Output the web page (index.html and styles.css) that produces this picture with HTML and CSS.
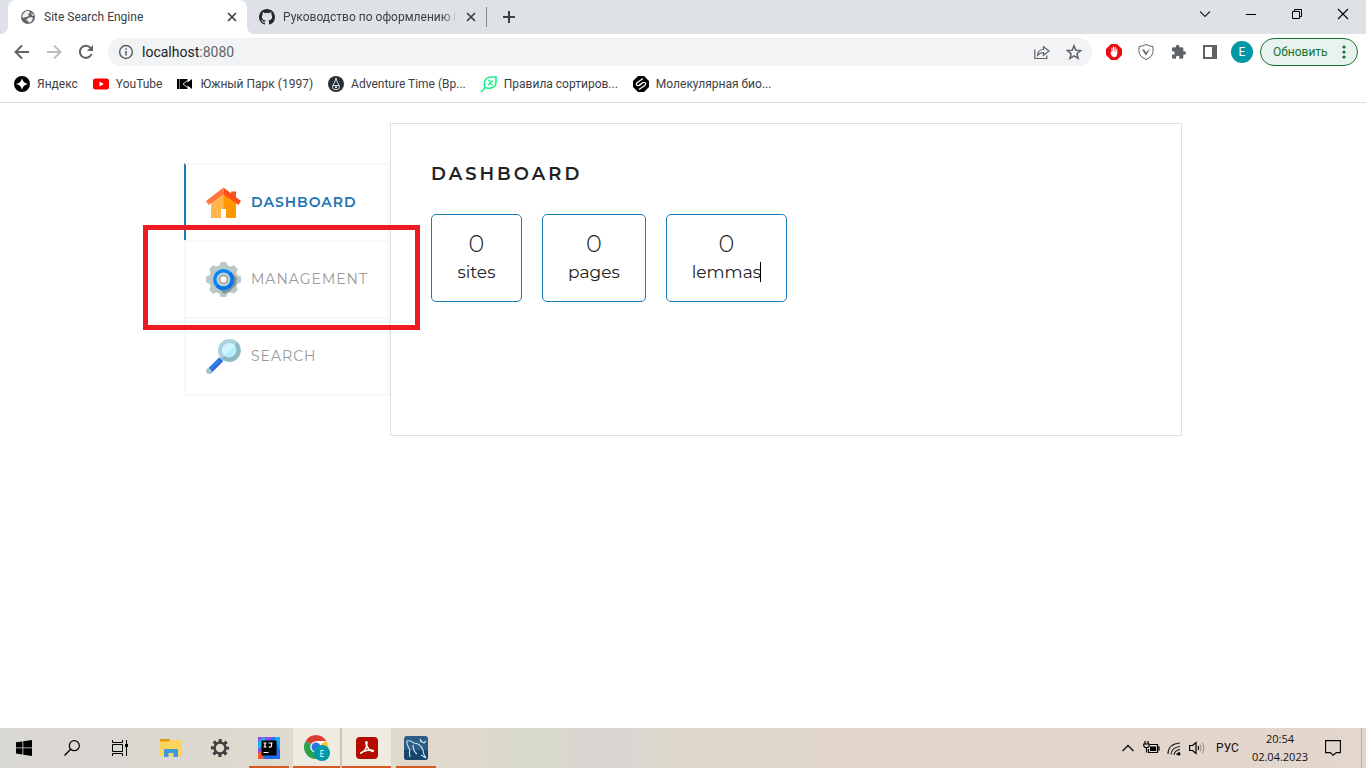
FILE: index.html
```html
<!DOCTYPE html>
<html lang="ru">
<head>
<meta charset="utf-8">
<title>Site Search Engine</title>
<link rel="stylesheet" href="styles.css">
</head>
<body>
<header class="browser">
  <div class="tabstrip">
    <div class="tab tab-active">
      <svg class="i16" viewBox="0 0 16 16"><circle cx="8" cy="8" r="7" fill="#5f6368"/><path d="M3 5l3-3h3l1 2-2 1 1 1.500-2 1.500H5L4 9 2 8zM8 9l3-1 2 1-1 3-3 2-1-2-2-1zM11 4l2 1 1 2-2-.5z" fill="#fff" opacity=".9"/></svg>
      <span class="tab-title">Site Search Engine</span>
      <button class="icon-btn" aria-label="Закрыть вкладку"><svg class="i16" viewBox="0 0 16 16"><path d="M4 4l8 8M12 4l-8 8" stroke="#3c4043" stroke-width="1.700"/></svg></button>
    </div>
    <div class="tab">
      <svg class="i16" viewBox="0 0 16 16"><path fill="#24292f" d="M8 0C3.580 0 0 3.580 0 8c0 3.540 2.290 6.530 5.470 7.590.4.070.55-.17.55-.38 0-.19-.01-.82-.01-1.490-2.010.37-2.530-.49-2.690-.94-.09-.23-.48-.94-.82-1.130-.28-.15-.68-.52-.01-.53.63-.01 1.080.58 1.230.82.72 1.210 1.870.87 2.330.66.070-.52.28-.87.51-1.070-1.780-.2-3.640-.89-3.640-3.950 0-.87.31-1.590.82-2.150-.08-.2-.36-1.020.08-2.120 0 0 .67-.21 2.200.82a7.600 7.600 0 0 1 4 0c1.530-1.040 2.200-.82 2.200-.82.44 1.100.16 1.920.08 2.120.51.56.82 1.270.82 2.150 0 3.070-1.870 3.750-3.650 3.950.29.25.54.73.54 1.480 0 1.070-.01 1.930-.01 2.200 0 .21.15.46.55.38A8 8 0 0 0 16 8c0-4.420-3.580-8-8-8z"/></svg>
      <span class="tab-title fade">Руководство по оформлению M</span>
      <button class="icon-btn" aria-label="Закрыть вкладку"><svg class="i16" viewBox="0 0 16 16"><path d="M4 4l8 8M12 4l-8 8" stroke="#3c4043" stroke-width="1.700"/></svg></button>
    </div>
    <button class="icon-btn new-tab" aria-label="Новая вкладка"><svg class="i16" viewBox="0 0 16 16"><path d="M8 2v12M2 8h12" stroke="#3c4043" stroke-width="2"/></svg></button>
    <div class="window-buttons">
      <button class="icon-btn" aria-label="Поиск вкладок"><svg class="i16" viewBox="0 0 16 16"><path d="M3 5.500l5 5 5-5" fill="none" stroke="#222" stroke-width="1.100"/></svg></button>
      <button class="icon-btn" aria-label="Свернуть"><svg class="i16" viewBox="0 0 16 16"><path d="M3 8.500h10" stroke="#000"/></svg></button>
      <button class="icon-btn" aria-label="Восстановить"><svg class="i16" viewBox="0 0 16 16"><path d="M3.500 5.500h7v7h-7zM5.500 5.500v-2h7v7h-2" fill="none" stroke="#000"/></svg></button>
      <button class="icon-btn" aria-label="Закрыть"><svg class="i16" viewBox="0 0 16 16"><path d="M3 3l10 10M13 3L3 13" stroke="#000" stroke-width="1.100"/></svg></button>
    </div>
  </div>
  <div class="toolbar">
    <div class="nav-buttons">
      <button class="icon-btn" aria-label="Назад"><svg class="i16" viewBox="0 0 16 16"><path d="M15 8H2M8 1.500L1.500 8 8 14.500" fill="none" stroke="#5f6368" stroke-width="1.900"/></svg></button>
      <button class="icon-btn" aria-label="Вперёд"><svg class="i16" viewBox="0 0 16 16"><path d="M1 8h13M8 1.500L14.500 8 8 14.500" fill="none" stroke="#bbbdbf" stroke-width="1.900"/></svg></button>
      <button class="icon-btn" aria-label="Обновить страницу"><svg class="i16" viewBox="0 0 16 16"><path d="M13.500 10A6 6 0 1 1 12.500 4" fill="none" stroke="#5f6368" stroke-width="2"/><path d="M15 1v6H9z" fill="#5f6368"/></svg></button>
    </div>
    <div class="omnibox">
      <svg class="i16" viewBox="0 0 16 16"><circle cx="8" cy="8" r="6.400" fill="none" stroke="#5f6368" stroke-width="1.500"/><path d="M8 7v4.500M8 4.200v1.600" stroke="#5f6368" stroke-width="1.600"/></svg>
      <span class="url">localhost<span class="port">:8080</span></span>
      <button class="icon-btn" aria-label="Поделиться"><svg class="i16" viewBox="0 0 16 16"><path d="M.8 5.500v9h12v-3M3.500 11.500c.3-4 2.500-6 6-6V2.700L15 7l-5.500 4.200V8.500C6.500 8.500 5 9.500 3.500 11.500z" fill="none" stroke="#5f6368" stroke-width="1.200"/></svg></button>
      <button class="icon-btn" aria-label="Добавить в закладки"><svg class="i16" viewBox="0 0 16 16"><path d="M8 1.800l1.800 4.400 4.800.4-3.700 3.100 1.200 4.700L8 11.900l-4.100 2.500 1.200-4.700L1.400 6.600l4.800-.4z" fill="none" stroke="#5f6368" stroke-width="1.500"/></svg></button>
    </div>
    <div class="extensions">
      <button class="icon-btn" aria-label="AdBlock"><svg class="i16" viewBox="0 0 16 16"><path d="M5 0h6l5 5v6l-5 5H5l-5-5V5z" fill="#e60f14"/><path d="M4.500 8l1 0V4q.5-.8 1 0v3h.5V3q.5-.8 1.100 0v4h.5V3.500q.5-.8 1.100 0V8h.5V5q.6-.7 1.100 0v5q-.5 3-3 3.200Q6 13 5 10.500z" fill="#fff"/></svg></button>
      <button class="icon-btn" aria-label="Защита"><svg class="i16" viewBox="0 0 16 16"><path d="M1 2.500Q5 2.300 8 .5q3 1.800 7 2v5q0 5-7 8-7-3-7-8z" fill="none" stroke="#5f6368"/><path d="M4 5.500h2.200l1.700 3L12.500 4 8 11.500z" fill="#5f6368"/></svg></button>
      <button class="icon-btn" aria-label="Расширения"><svg class="i16" viewBox="0 0 24 24"><path fill="#5f6368" d="M21.500 11H20V7c0-1.100-.9-2-2-2h-4V3.500a2.500 2.500 0 0 0-5 0V5H5c-1.100 0-2 .9-2 2v3.800h1.500a2.700 2.700 0 0 1 0 5.400H3V20c0 1.100.9 2 2 2h3.800v-1.500a2.700 2.700 0 0 1 5.400 0V22H18c1.100 0 2-.9 2-2v-4h1.500a2.500 2.500 0 0 0 0-5z"/></svg></button>
      <button class="icon-btn" aria-label="Боковая панель"><svg class="i16" viewBox="0 0 16 16"><path fill-rule="evenodd" fill="#5f6368" d="M1 1h14v14H1zm2 2v10h7V3z"/></svg></button>
    </div>
    <button class="avatar" aria-label="Профиль E">E</button>
    <button class="update">Обновить<svg class="dots" viewBox="0 0 4 14"><g fill="#137333"><circle cx="2" cy="2" r="1.600"/><circle cx="2" cy="7" r="1.600"/><circle cx="2" cy="12" r="1.600"/></g></svg></button>
  </div>
  <nav class="bookmarks" aria-label="Закладки">
    <a href="#"><svg class="i16" viewBox="0 0 16 16"><circle cx="8" cy="8" r="8"/><path d="M8 2q.8 5.200 6 6-5.200.8-6 6-.8-5.200-6-6 5.200-.8 6-6z" fill="#fff"/></svg>Яндекс</a>
    <a href="#"><svg class="i16" viewBox="0 0 16 16"><rect y="2.500" width="16" height="11" rx="2.500" fill="red"/><path d="M6.500 5.500v5L10.800 8z" fill="#fff"/></svg>YouTube</a>
    <a href="#"><svg class="i16" viewBox="0 0 16 16"><path d="M0 3h10.500v3.500L15 3v10l-4.500-3.500V13H0z"/><path d="M2.500 3v10" stroke="#777"/><path d="M10.500 4.500L6 8l4.500 3.500" fill="none" stroke="#ddd"/></svg>Южный Парк (1997)</a>
    <a href="#"><svg class="i16" viewBox="0 0 16 16"><circle cx="8" cy="8" r="8" fill="#25303b"/><path d="M8 2l1.200 4 2 3.500v3l-1.500 1H6.300l-1.500-1v-3l2-3.500zM5 9.500h6" fill="none" stroke="#d5dce2"/><circle cx="8" cy="11.200" r="1" fill="#fff"/></svg>Adventure Time (Вр...</a>
    <a href="#"><svg class="i16" viewBox="0 0 16 16"><path d="M0 16l5-5M4 11.500Q2.500 8 4 4.500 6 1 10 1h5v5q0 4-3.500 5.500-3 1.500-7.500 0z" fill="none" stroke="#22f08f" stroke-width="1.700"/><path d="M7 4.500q1.500-.5 2 1l.7 2q.5 1.500 2 .8M12 4.500L7 9" fill="none" stroke="#22f08f" stroke-width="1.300"/></svg>Правила сортиров...</a>
    <a href="#"><svg class="i16" viewBox="0 0 16 16"><path d="M5 0h6l5 5v6l-5 5H5l-5-5V5z"/><path d="M10 2.500L4 6.800q-1.500 1.700.3 2.700 1 .4 2-.4L10 6.500M6 13.500l6-4.300q1.500-1.700-.3-2.700-1-.4-2 .4L6 9.700" fill="none" stroke="#fff" stroke-width="1.200"/></svg>Молекулярная био...</a>
  </nav>
</header>

<main class="page">
  <nav class="menu" aria-label="Разделы">
    <a class="menu-item menu-item-active" href="#">
      <svg class="menu-icon" viewBox="0 0 35 35"><path d="M5 17L17.500 8 30 17v16H5z" fill="#ffb64c"/><path d="M17.500 8L30 17v16H17.500z" fill="#ff9800"/><path d="M15 24h5v9h-5z" fill="#fff"/><path d="M25 6.500h5V13l-5-4z" fill="#ff5019"/><path d="M17.500 2.500L0 16l2.500 4 15-10.500z" fill="#ff783f"/><path d="M17.500 2.500L35 16l-2.500 4-15-10.500z" fill="#ff5019"/></svg>
      DASHBOARD</a>
    <a class="menu-item menu-item-marked" href="#">
      <svg class="menu-icon" viewBox="0 0 35 35"><g fill="#b9c9ca"><circle cx="17.500" cy="17.500" r="14.500"/><path id="tooth" d="M13 4l1.800-4h5.400L22 4v27l-1.800 4h-5.400L13 31z"/><use href="#tooth" transform="rotate(45 17.500 17.500)"/><use href="#tooth" transform="rotate(90 17.500 17.500)"/><use href="#tooth" transform="rotate(135 17.500 17.500)"/></g><path d="M25 10l6 6-1 7-6 6-6 3-7-7z" fill="#829594"/><circle cx="17.500" cy="17.500" r="8.700" fill="#c9d2d2" stroke="#0b86f5" stroke-width="3.500"/><path d="M24 11.500a8.700 8.700 0 0 1-13 12" fill="none" stroke="#0875e8" stroke-width="3.500"/><circle cx="17.500" cy="17.500" r="4" fill="#fff" stroke="#a2aeb1" stroke-width="2"/></svg>
      MANAGEMENT</a>
    <a class="menu-item" href="#">
      <svg class="menu-icon" viewBox="0 0 35 35"><path d="M11 24l6-6" stroke="#8aa9b0" stroke-width="2"/><path d="M2.500 32.500L15 20" stroke="#2e7bea" stroke-width="5"/><path d="M4 34L16.500 21.500" stroke="#3c65ce" stroke-width="2"/><path d="M2.500 28.500l4 4-2 2q-2 1-3.500-.5-2-2-.5-3.500z" fill="#9fc7cf"/><circle cx="23.500" cy="11.500" r="9.500" fill="#d0f5ff" stroke="#aad2dd" stroke-width="4"/><path d="M17.500 17.500l12-12q3.500 6-1 10.500t-11 1.500z" fill="#b5eeff"/><path d="M30.200 4.800a9.500 9.500 0 0 1-13.400 13.400" fill="none" stroke="#8fb5bd" stroke-width="4"/></svg>
      SEARCH</a>
  </nav>
  <section class="panel">
    <h1 class="panel-title">DASHBOARD</h1>
    <div class="stats">
      <div class="stat"><span class="stat-value">0</span><span class="stat-label">sites</span></div>
      <div class="stat"><span class="stat-value">0</span><span class="stat-label">pages</span></div>
      <div class="stat"><span class="stat-value">0</span><span class="stat-label caret">lemmas</span></div>
    </div>
  </section>
</main>

<footer class="taskbar">
  <div class="launchers">
    <div class="system">
      <button class="launch" aria-label="Пуск"><svg class="i16" viewBox="0 0 16 16"><path d="M0 2.300L6.500 1.400v6.100H0zM7.300 1.300L16 0v7.500H7.300zM0 8.300h6.500v6.200L0 13.600zM7.300 8.300H16V16l-8.700-1.300z"/></svg></button>
      <button class="launch" aria-label="Поиск"><svg class="i16" viewBox="0 0 16 16"><circle cx="10.300" cy="5.700" r="5" fill="none" stroke="#000" stroke-width="1.200"/><path d="M6.700 9.300L.5 15.500" stroke="#000" stroke-width="1.400"/></svg></button>
      <button class="launch" aria-label="Представление задач"><svg class="i16" viewBox="0 0 16 16"><path d="M.5 0v2.500h10V0M.5 16v-2.500h10V16M.5 4.500h10v7H.5zM14.500 0v16" fill="none" stroke="#000"/><path d="M13 4h3v3h-3z"/></svg></button>
    </div>
    <button class="launch" aria-label="Проводник"><svg class="i24" viewBox="0 0 24 24"><path d="M1 3h9l2 2v2H1z" fill="#dc9a13"/><path d="M1 5.500h8.500l2-1.500H23v16H1z" fill="#ffd45e"/><path d="M5 21v-7q0-1 1-1h12q1 0 1 1v7h-4.500v-4h-5v4z" fill="#3c98db"/></svg></button>
    <button class="launch" aria-label="Параметры"><svg class="i24" viewBox="0 0 24 24"><circle cx="12" cy="12" r="5.500" fill="none" stroke="#3e3e3e" stroke-width="2.500"/><circle cx="12" cy="12" r="7.500" fill="none" stroke="#3e3e3e" stroke-width="3.200" stroke-dasharray="3 2.890" stroke-dashoffset="1.500"/></svg></button>
    <button class="launch running" aria-label="IntelliJ IDEA"><svg class="i24" viewBox="0 0 24 24"><path d="M1 1h22v22H1z" fill="#1d6bf0"/><path d="M1 1h15L8 9l-4 9-3 4z" fill="#8d4de8"/><path d="M1 6l6-5 2 4-5 6-3 2z" fill="#19b7e7"/><path d="M1 17l4-2 2 8H1z" fill="#fe5a28"/><path d="M17 1h6v14z" fill="#18a8f4"/><path d="M4.500 4.500h15v15h-15z"/><path d="M6.500 7h3M8 7v4M6.500 11h3M11.500 7h4M14.500 7v3q0 1.200-2.800 1M6.500 16.500h5" fill="none" stroke="#fff" stroke-width="1.200"/></svg></button>
    <button class="launch running open" aria-label="Google Chrome"><svg class="i28" viewBox="0 0 28 28"><circle cx="13" cy="13" r="12" fill="#fff"/><path d="M13 13L2.600 7A12 12 0 0 1 23.400 7H13z" fill="#de3d32"/><path d="M13 13l10.400-6A12 12 0 0 1 13 25z" fill="#fcc31e"/><path d="M2.600 7A12 12 0 0 0 13 25l4-9-4-3z" fill="#2ba24c"/><circle cx="13" cy="13" r="5.800" fill="#fff"/><circle cx="13" cy="13" r="4.500" fill="#2c71e8"/><circle cx="19" cy="19" r="8" fill="#0097a7"/><text class="badge" x="19" y="22.500" text-anchor="middle">E</text></svg></button>
    <button class="launch running second" aria-label="Adobe Acrobat"><svg class="i24" viewBox="0 0 24 24"><rect x="1" y="1" width="22" height="22" rx="4" fill="#b30b00"/><path d="M6 17q6-2.500 6-10 0-1.500-.7-1.200-1 .7.400 4 1.800 4.200 5.500 5.700 1.500 0 1-1-1.200-1-5.500-.2-4.500.8-6.400 2.200-1 1-.3.500z" fill="none" stroke="#fff" stroke-width="1.500"/></svg></button>
    <button class="launch running" aria-label="MySQL Workbench"><svg class="i24" viewBox="0 0 24 24"><rect width="24" height="24" rx="3" fill="#2b5d88"/><path d="M0 14h24v7q0 3-3 3H3q-3 0-3-3z" fill="#17456b"/><path d="M6 21q-1-5 0-7-4-7-3-9 3-1 7 2 6 0 9 7 0 4 3 8l-5-3M9 9q0 6 4 9M16 3q1 3 4 4l2-2M18 6l-2-1" fill="none" stroke="#c8e0ee" stroke-width="1.200"/></svg></button>
  </div>
  <div class="tray">
    <button class="icon-btn" aria-label="Скрытые значки"><svg class="i16" viewBox="0 0 16 16"><path d="M2.500 11L8 5.500l5.500 5.500" fill="none" stroke="#111" stroke-width="1.400"/></svg></button>
    <svg class="i16" viewBox="0 0 16 16"><path d="M2 1v3M5 1v3M.8 4h5.400v2L5 7.500H2L.8 6zM3.500 7.500v5M7 4.500h7.500v8h-9V9M14.500 7H16v3h-1.500" fill="none" stroke="#000" stroke-width="1.200"/><path d="M7 6.500h6v4.500H7z"/></svg>
    <svg class="i16" viewBox="0 0 16 16"><path d="M2 14Q2 4 14 3M5 14.500Q5.500 7.500 14 6.500M8 15q.5-4.500 6-5.500M10.500 15q.5-2 3.500-2.500" fill="none" stroke="#222" stroke-width="1.200"/><circle cx="13" cy="14" r="1.500"/></svg>
    <svg class="i16" viewBox="0 0 16 16"><path d="M.6 5.500h3L7 2.500v11L3.600 10.500h-3zM9 6q1.500 2 0 4" fill="none" stroke="#000" stroke-width="1.200"/><path d="M11 4.500q2.500 3.500 0 7M13.500 3q3 5 0 10" fill="none" stroke="#958e87"/></svg>
    <span class="lang">РУС</span>
    <div class="clock"><span>20:54</span><span>02.04.2023</span></div>
    <button class="icon-btn notices" aria-label="Уведомления"><svg class="i16" viewBox="0 0 16 16"><path d="M.6.600h14.800v12h-4L8 15.300l-2.500-2.700H.6z" fill="none" stroke="#000" stroke-width="1.100"/></svg></button>
  </div>
</footer>
</body>
</html>
```
FILE: styles.css
```css
* { box-sizing: border-box; }
body {
  margin: 0;
  min-height: 100vh;
  display: flex;
  flex-direction: column;
  background: #fff;
  font: 12px/16px Roboto, "Open Sans", "Noto Sans", sans-serif;
  color: #3c4043;
}
button { font: inherit; color: inherit; border: 0; padding: 0; background: none; }
a { color: inherit; text-decoration: none; }
svg { display: block; flex: none; overflow: visible; }
.i16 { width: 16px; height: 16px; }
.i24 { width: 24px; height: 24px; }
.i28 { width: 28px; height: 28px; }
.icon-btn { display: flex; flex: none; }

/* Browser chrome */
.browser { border-bottom: 1px solid #dadce0; }
.tabstrip {
  display: flex;
  align-items: center;
  height: 34px;
  padding-left: 8px;
  background: #dee1e6;
}
.tab {
  display: flex;
  align-items: center;
  gap: 8px;
  width: 239px;
  height: 34px;
  padding: 0 7px 0 12px;
}
.tab-active {
  position: relative;
  background: #fff;
  border-radius: 8px 8px 0 0;
}
.tab-active::before, .tab-active::after {
  content: "";
  position: absolute;
  bottom: 0;
  width: 8px;
  height: 8px;
}
.tab-active::before { right: 100%; background: radial-gradient(circle at 0 0, #dee1e6 8px, #fff 8px); }
.tab-active::after { left: 100%; background: radial-gradient(circle at 100% 0, #dee1e6 8px, #fff 8px); }
.tab-title { flex: 1; min-width: 0; white-space: nowrap; }
.fade {
  -webkit-mask-image: linear-gradient(90deg, #000 92%, transparent 104%);
  mask-image: linear-gradient(90deg, #000 92%, transparent 104%);
}
.new-tab {
  padding: 2px 14px;
  border-left: 1px solid #80868b;
}
.window-buttons { display: flex; gap: 30px; margin-left: auto; padding: 0 15px 6px 0; }
.toolbar { display: flex; align-items: center; height: 36px; padding-right: 8px; }
.nav-buttons { display: flex; gap: 16px; padding: 0 14px; }
.omnibox {
  flex: 1;
  display: flex;
  align-items: center;
  gap: 16px;
  height: 28px;
  padding: 0 10px;
  border-radius: 14px;
  background: #f1f3f4;
}
.url { flex: 1; margin-left: -8px; font-size: 14px; color: #202124; }
.port { color: #5f6368; }
.extensions { display: flex; gap: 16px; padding: 0 13px 0 14px; }
.avatar {
  width: 22px;
  height: 22px;
  border-radius: 50%;
  background: #0097a7;
  color: #fff;
}
.update {
  display: flex;
  align-items: center;
  justify-content: space-between;
  gap: 14px;
  height: 28px;
  min-width: 98px;
  margin-left: 7px;
  padding: 0 11px 0 12px;
  border: 1px solid #137333;
  border-radius: 14px;
  background: #e8f2ee;
  color: #137333;
}
.dots { width: 4px; height: 14px; }
.bookmarks {
  display: flex;
  align-items: center;
  gap: 15px;
  height: 32px;
  padding: 0 14px 4px;
}
.bookmarks a { display: flex; align-items: center; gap: 7px; white-space: nowrap; }

/* Page */
.page {
  flex: 1;
  display: flex;
  align-items: flex-start;
  width: 100%;
  max-width: 998px;
  margin: 0 auto;
  padding-top: 20px;
  font-family: Montserrat, Inter, sans-serif;
}
.menu {
  width: 206px;
  margin-top: 40px;
  border-bottom: 2px solid #f7f7f7;
}
.menu-item {
  display: flex;
  align-items: center;
  gap: 10px;
  padding: 20px 0 20px 20px;
  border: 2px solid #f7f7f7;
  border-bottom: 0;
  font-size: 14px;
  line-height: 15px;
  font-weight: 400;
  letter-spacing: 1px;
  color: #999;
}
.menu-item-active { border-left-color: #1b7bb4; color: #1b74b4; font-weight: 600; }
.menu-item-marked { position: relative; }
.menu-item-marked::after {
  content: "";
  position: absolute;
  inset: -17px -32px -13px -43px;
  border: 5px solid #ed1c24;
  pointer-events: none;
}
.menu-icon { width: 35px; height: 35px; }
.panel {
  flex: 1;
  min-height: 313px;
  padding: 40px;
  border: 1px solid #e0e0e0;
}
.panel-title {
  margin: 0 0 30px;
  font-size: 18px;
  line-height: 20px;
  font-weight: 600;
  letter-spacing: 3px;
  color: #222;
}
.stats { display: flex; flex-wrap: wrap; gap: 20px; }
.stat {
  display: flex;
  flex-direction: column;
  align-items: center;
  min-width: 91px;
  padding: 15px 25px;
  border: 1px solid #1b7bb4;
  border-radius: 5px;
  color: #222;
}
.stat-value { font-size: 24px; line-height: 28px; font-weight: 300; }
.stat-label { font-size: 17px; line-height: 28px; }
.caret { position: relative; }
.caret::after {
  content: "";
  position: absolute;
  top: 4px;
  right: 0;
  width: 1px;
  height: 20px;
  background: #000;
}

/* Taskbar */
.taskbar {
  display: flex;
  justify-content: space-between;
  height: 40px;
  color: #111;
  background: linear-gradient(90deg, #dad8d4, #dad7d2 8%, #dfdacd 22%, #dfd9cb 35%, #dadacb 37%, #dadacb 40%, #d9d6d1 42%, #d9d6d1 46%, #ddd8cb 49%, #dfd6ca 58%, #e1d4cb 62%, #e3d6cc);
}
.launchers, .system { display: flex; }
.system .launch { width: 48px; }
.system { margin-right: 2px; }
.launch {
  display: flex;
  align-items: center;
  justify-content: center;
  width: 49px;
  height: 40px;
}
.running {
  background: linear-gradient(#d35a25, #d35a25) center bottom / 40px 2px no-repeat;
}
.open, .second { background-size: 100% 2px; background-color: #f0ebe1; }
.open { border-right: 2px solid #cfc5b8; }
.badge { font: 9px "Open Sans", sans-serif; fill: #fff; }
.tray {
  display: flex;
  align-items: center;
  gap: 7px;
  padding-right: 4px;
}
.lang { margin: 0 6px 0 4px; }
.clock {
  display: flex;
  flex-direction: column;
  align-items: center;
  font-family: "Open Sans", "Noto Sans", sans-serif;
  font-size: 11px;
  line-height: 18px;
}
.notices {
  padding: 12px 20px 12px 10px;
  border-right: 1px solid #b8aea4;
}
```
